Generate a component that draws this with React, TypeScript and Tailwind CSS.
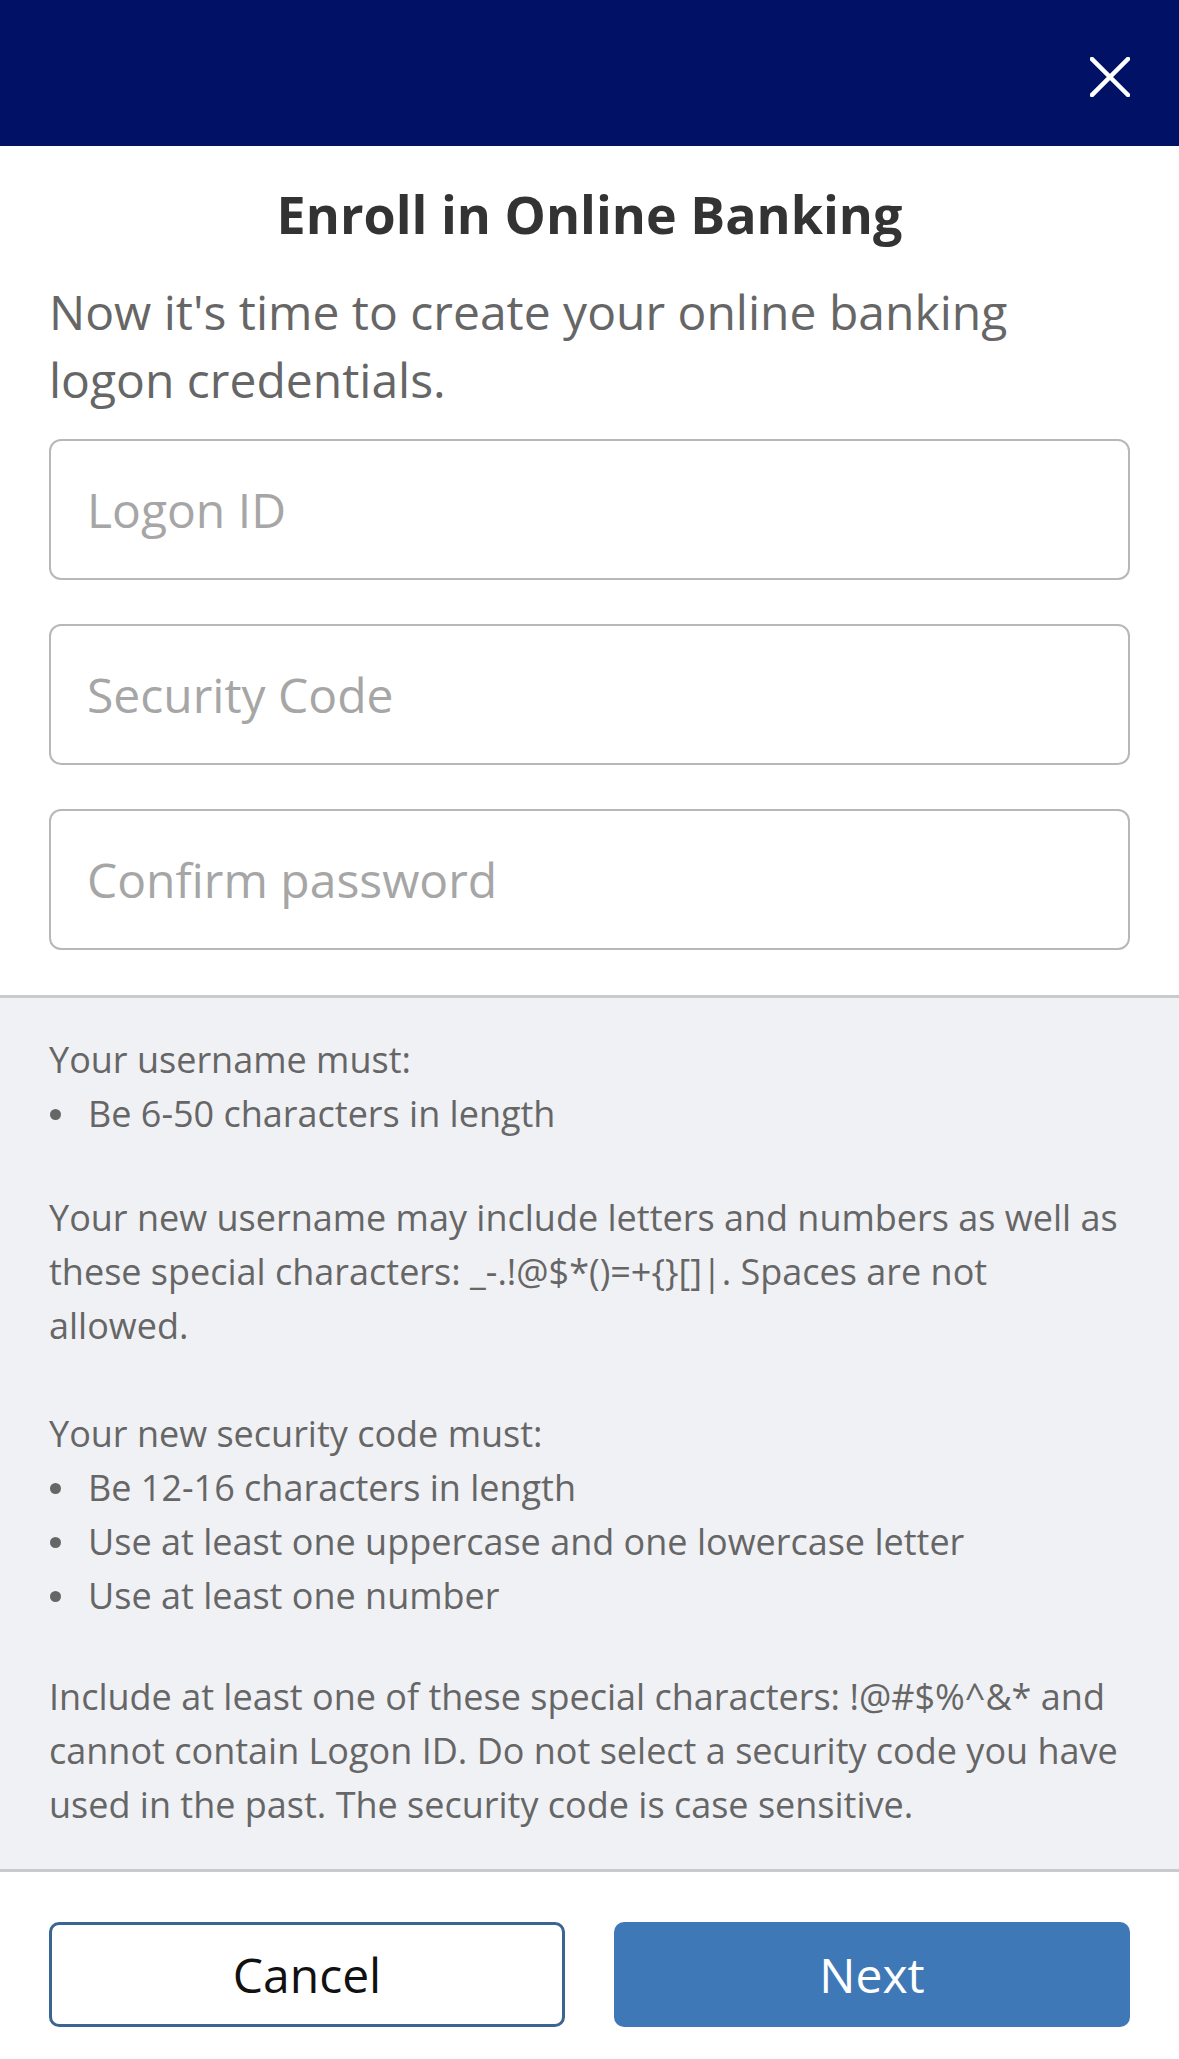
import React from "react";

const Bullet = ({ children }: { children: React.ReactNode }) => (
  <div className="flex items-center">
    <span className="w-[39px] flex items-center">
      <span className="ml-[1px] block w-[11px] h-[11px] rounded-full bg-[#666666]" />
    </span>
    <span>{children}</span>
  </div>
);

const Field = ({ label }: { label: string }) => (
  <div className="h-[141px] border-2 border-[#b8b8b8] rounded-[12px] flex items-center pl-[36px] text-[48px] text-[#a6a6a6] bg-white">
    {label}
  </div>
);

export default function App() {
  return (
    <div
      className="w-[1179px] h-[2059px] bg-white flex flex-col overflow-hidden"
      style={{ fontFamily: '"Open Sans", "Noto Sans", sans-serif' }}
    >
      <header className="h-[146px] shrink-0 bg-[#001166] flex items-center justify-end pr-[49px] pt-[8px]">
        <svg width="40" height="40" viewBox="0 0 40 40" fill="none">
          <path d="M2 2 L38 38 M38 2 L2 38" stroke="#ffffff" strokeWidth="4.5" strokeLinecap="square" />
        </svg>
      </header>

      <h1 className="mt-[37px] text-center text-[52px] leading-[62px] font-bold text-[#333333]">
        Enroll in Online Banking
      </h1>

      <p className="mt-[33px] px-[49px] text-[48px] leading-[68px] text-[#666666]">
        Now it's time to create your online banking
        <br />
        logon credentials.
      </p>

      <div className="mt-[25px] px-[49px] flex flex-col gap-[44px] pb-[45px]">
        <Field label="Logon ID" />
        <Field label="Security Code" />
        <Field label="Confirm password" />
      </div>

      <section className="border-t-[3px] border-b-[3px] border-[#c9cacd] bg-[#f0f1f5] px-[49px] pt-[35px] pb-[37px] text-[36px] leading-[54px] text-[#666666]">
        <div>Your username must:</div>
        <Bullet>Be 6-50 characters in length</Bullet>

        <p className="mt-[50px]">
          Your new username may include letters and numbers as well as
          <br />
          these special characters: _-.!@$*()=+{"{}"}[]|. Spaces are not
          <br />
          allowed.
        </p>

        <div className="mt-[54px]">Your new security code must:</div>
        <Bullet>Be 12-16 characters in length</Bullet>
        <Bullet>Use at least one uppercase and one lowercase letter</Bullet>
        <Bullet>Use at least one number</Bullet>

        <p className="mt-[47px]">
          Include at least one of these special characters: !@#$%^&amp;* and
          <br />
          cannot contain Logon ID. Do not select a security code you have
          <br />
          used in the past. The security code is case sensitive.
        </p>
      </section>

      <div className="px-[49px] pt-[50px] grid grid-cols-2 gap-[49px]">
        <button className="h-[105px] border-[3px] border-[#3a6592] rounded-[10px] bg-white text-[48px] text-[#111111] flex items-center justify-center">
          Cancel
        </button>
        <button className="h-[105px] rounded-[10px] bg-[#3f78b7] text-[48px] text-white flex items-center justify-center">
          Next
        </button>
      </div>
    </div>
  );
}
